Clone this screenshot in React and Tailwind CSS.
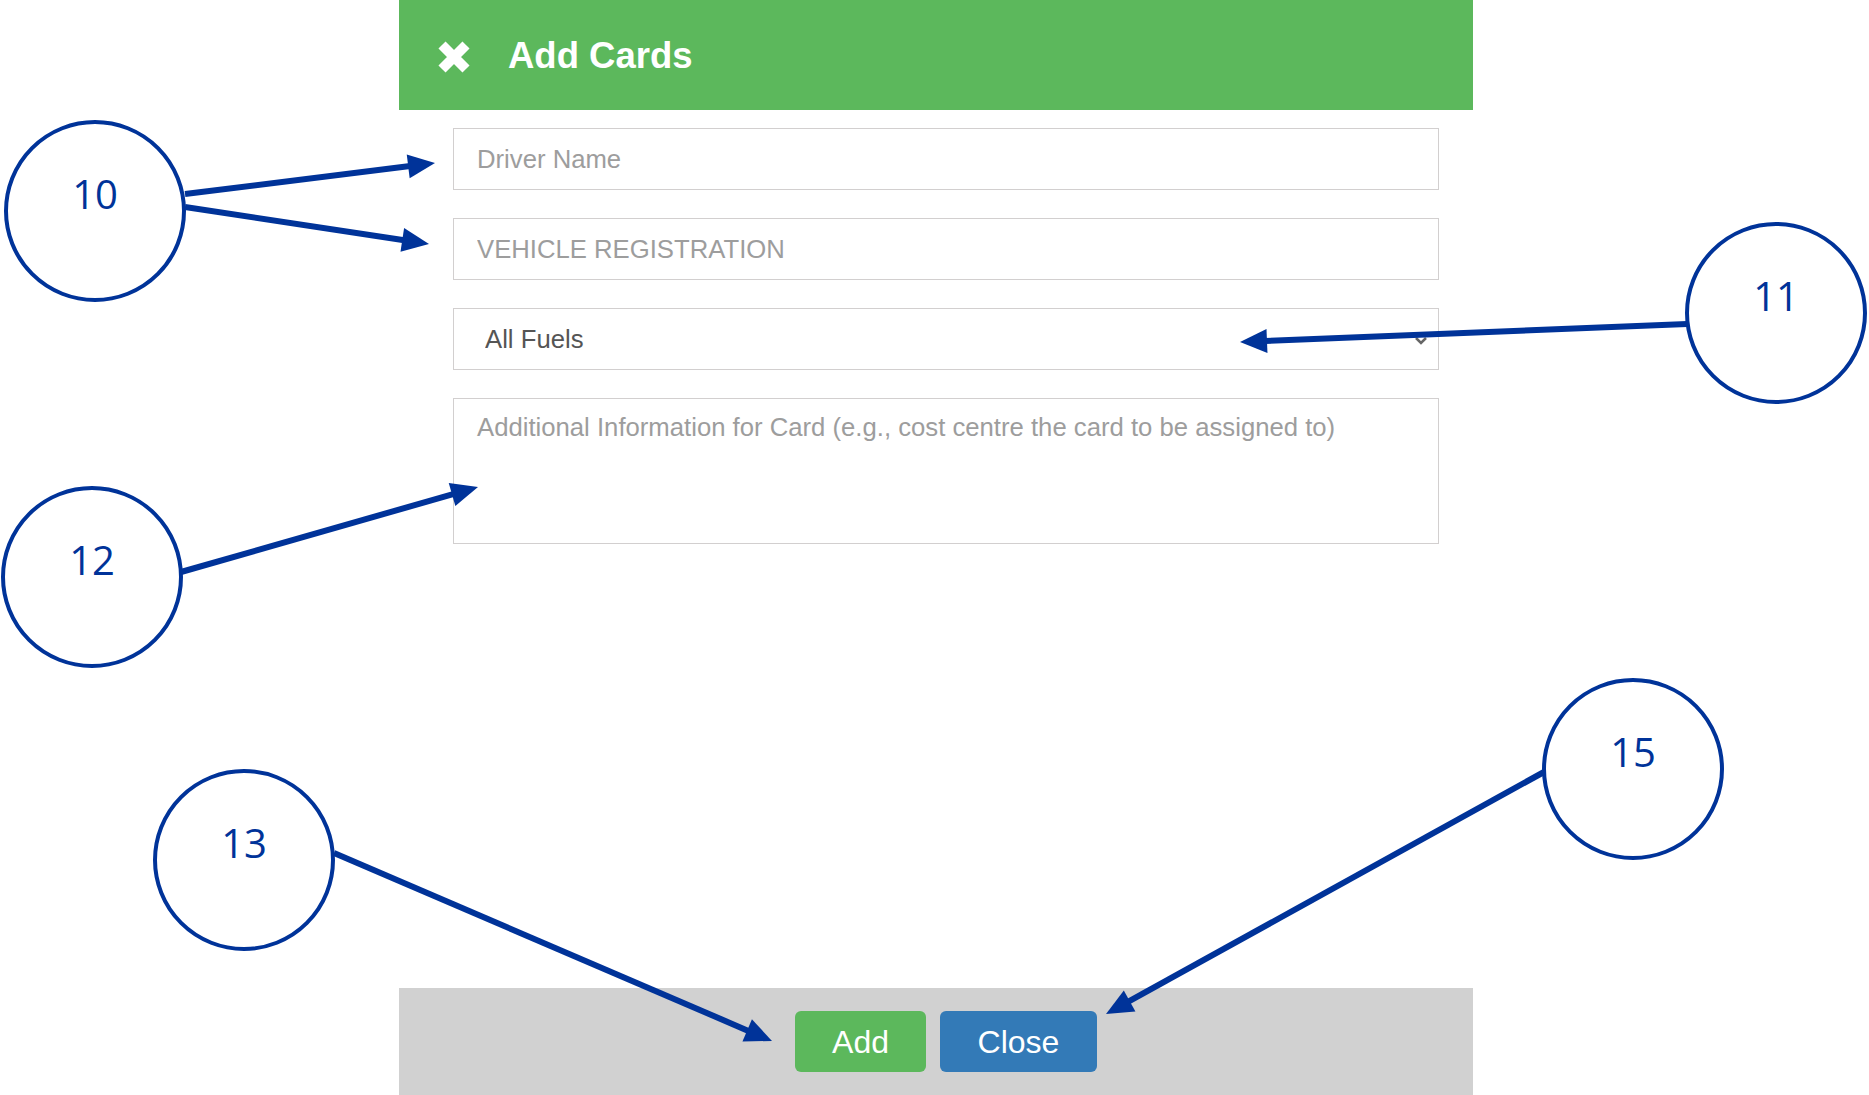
import React from "react";

const BLUE = "#003399";

const callouts = [
  { n: "10", cx: 95, cy: 211 },
  { n: "11", cx: 1776, cy: 313 },
  { n: "12", cx: 92, cy: 577 },
  { n: "13", cx: 244, cy: 860 },
  { n: "15", cx: 1633, cy: 769 },
];

const arrows = [
  [185, 194, 435, 163],
  [185, 207, 429, 244],
  [1687, 324, 1240, 342],
  [181, 572, 478, 487],
  [334, 853, 772, 1041],
  [1544, 772, 1106, 1014],
];

const Arrow = ({ a }) => {
  const [x1, y1, x2, y2] = a;
  const len = Math.hypot(x2 - x1, y2 - y1);
  const dx = (x2 - x1) / len;
  const dy = (y2 - y1) / len;
  const head = 27;
  const half = 12;
  const bx = x2 - dx * head;
  const by = y2 - dy * head;
  const pts = `${x2},${y2} ${bx - dy * half},${by + dx * half} ${bx + dy * half},${by - dx * half}`;
  return (
    <g>
      <line x1={x1} y1={y1} x2={bx + dx * 2} y2={by + dy * 2} stroke={BLUE} strokeWidth="6" />
      <polygon points={pts} fill={BLUE} />
    </g>
  );
};

const Annotations = () => (
  <svg className="absolute inset-0 pointer-events-none" width="1869" height="1095" viewBox="0 0 1869 1095">
    {callouts.map((c) => (
      <g key={c.n}>
        <circle cx={c.cx} cy={c.cy} r="89" fill="none" stroke={BLUE} strokeWidth="4" />
        <text
          x={c.cx}
          y={c.cy - 2}
          textAnchor="middle"
          fill={BLUE}
          fontSize="40"
          fontFamily="'Open Sans', sans-serif"
        >
          {c.n}
        </text>
      </g>
    ))}
    {arrows.map((a, i) => (
      <Arrow key={i} a={a} />
    ))}
  </svg>
);

const field =
  "w-full h-[62px] border border-[#d2cfcf] bg-white px-[23px] text-[25.7px] text-[#555] placeholder:text-[#9d9d9d] outline-none";

const App = () => {
  return (
    <div className="relative w-full h-[1095px] bg-white overflow-hidden font-['Liberation_Sans']">
      <div className="ml-[399px] w-[1074px] h-full flex flex-col">
        <div className="h-[110px] bg-[#5cb85c] flex items-center pl-[37px] pt-[3px] gap-[36px] text-white">
          <svg width="36" height="36" viewBox="0 0 36 36">
            <path d="M6 6 L30 30 M30 6 L6 30" stroke="white" strokeWidth="10" />
          </svg>
          <span className="text-[36.5px] font-bold">Add Cards</span>
        </div>

        <div className="flex-1 flex flex-col gap-[28px] pt-[18px] pl-[54px] pr-[34px]">
          <input type="text" className={field} placeholder="Driver Name" />
          <input type="text" className={field} placeholder="VEHICLE REGISTRATION" />
          <div className="relative">
            <select className={field + " appearance-none pl-[31px]"} defaultValue="all">
              <option value="all">All Fuels</option>
            </select>
            <svg
              className="absolute right-[12px] top-[29px] pointer-events-none"
              width="12"
              height="8"
              viewBox="0 0 12 8"
            >
              <path d="M1 1 L6 6 L11 1" fill="none" stroke="#666" strokeWidth="2.5" />
            </svg>
          </div>
          <textarea
            className="w-full h-[146px] border border-[#d2cfcf] px-[23px] py-[11px] text-[25.7px] leading-[1.4] text-[#555] placeholder:text-[#9d9d9d] outline-none resize-none"
            placeholder="Additional Information for Card (e.g., cost centre the card to be assigned to)"
          />
        </div>

        <div className="h-[107px] bg-[#d1d1d1] flex items-center justify-center gap-[14px] pl-[20px]">
          <button className="w-[131px] h-[61px] rounded-[6px] bg-[#5cb85c] text-white text-[32px]">
            Add
          </button>
          <button className="w-[157px] h-[61px] rounded-[6px] bg-[#337ab7] text-white text-[32px]">
            Close
          </button>
        </div>
      </div>

      <Annotations />
    </div>
  );
};

export default App;
